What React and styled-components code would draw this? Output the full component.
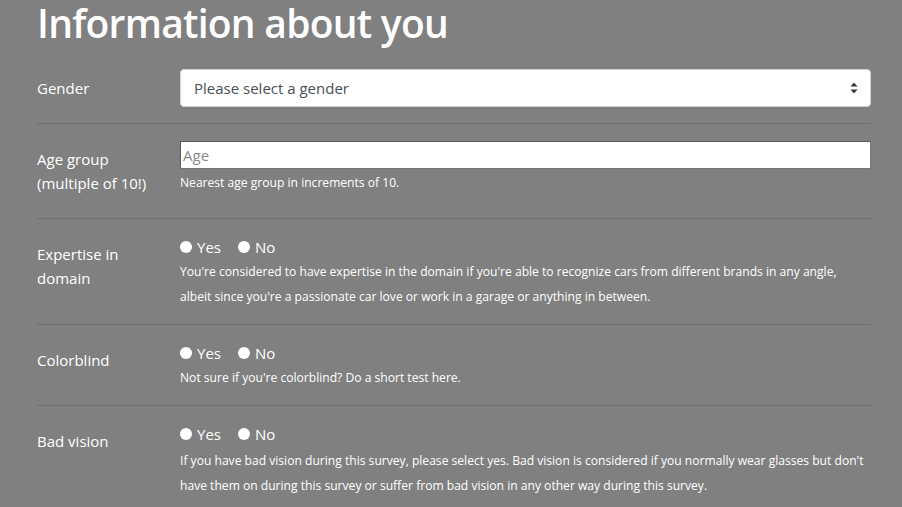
import React from "react";
import styled, { createGlobalStyle } from "styled-components";

const Global = createGlobalStyle`
  html, body { margin: 0; padding: 0; }
  body {
    background: #808080;
    color: #ffffff;
    font-family: "Open Sans", "Noto Sans", sans-serif;
    overflow: hidden;
  }
`;

const Page = styled.div`
  width: 834px;
  margin-left: 37px;
`;

const Title = styled.h1`
  margin: 0;
  font-size: 39px;
  font-weight: 600;
  line-height: 46px;
  height: 53px;
  letter-spacing: -0.75px;
`;

const Row = styled.div`
  display: grid;
  grid-template-columns: 143px 1fr;
  padding: 16px 0;
  border-bottom: ${(p) => (p.$last ? "none" : "1px solid #6e6e6e")};
`;

const Label = styled.div`
  font-size: 15px;
  line-height: 24px;
  padding: 7px 0;
`;

const Control = styled.div`
  display: flex;
  flex-direction: column;
`;

const SelectBox = styled.div`
  height: 38px;
  box-sizing: border-box;
  background: #fff;
  border: 1px solid #ced4da;
  border-radius: 4px;
  display: flex;
  align-items: center;
  justify-content: space-between;
  padding: 0 12px 0 13px;
  color: #495057;
  font-size: 15px;
`;

const TextInput = styled.input`
  height: 28px;
  box-sizing: border-box;
  margin: 1px 0 0;
  border: 1px solid #767676;
  border-top-color: #5a5a5a;
  border-left-color: #5a5a5a;
  background: #fff;
  font-family: inherit;
  font-size: 15px;
  padding: 0 2px;
  outline: none;
  &::placeholder { color: #8a8a8a; }
`;

const Help = styled.div`
  font-size: 12.1px;
  line-height: 25px;
  white-space: nowrap;
  margin-top: ${(p) => p.$mt || 0}px;
  margin-bottom: -1px;
`;

const Radios = styled.div`
  display: flex;
  gap: 17px;
  height: 24px;
  align-items: center;
  font-size: 15px;
`;

const RadioItem = styled.label`
  display: flex;
  align-items: center;
  gap: 5px;
`;

const Dot = styled.span`
  width: 12px;
  height: 12px;
  border-radius: 50%;
  background: #fff;
  display: inline-block;
`;

const Arrows = () => (
  <svg width="8" height="12" viewBox="0 0 8 12">
    <path d="M4 0.5 L7.5 4.5 H0.5 Z" fill="#343a40" />
    <path d="M4 11.5 L7.5 7.5 H0.5 Z" fill="#343a40" />
  </svg>
);

const YesNo = () => (
  <Radios>
    <RadioItem><Dot />Yes</RadioItem>
    <RadioItem><Dot />No</RadioItem>
  </Radios>
);

export default function App() {
  return (
    <Page>
      <Global />
      <Title>Information about you</Title>
      <Row>
        <Label>Gender</Label>
        <Control>
          <SelectBox>
            <span>Please select a gender</span>
            <Arrows />
          </SelectBox>
        </Control>
      </Row>
      <Row>
        <Label>Age group<br />(multiple of 10!)</Label>
        <Control>
          <TextInput placeholder="Age" />
          <Help $mt={1}>Nearest age group in increments of 10.</Help>
        </Control>
      </Row>
      <Row>
        <Label>Expertise in<br />domain</Label>
        <Control>
          <YesNo />
          <Help>
            You're considered to have expertise in the domain if you're able to recognize cars from different brands in any angle,<br />
            albeit since you're a passionate car love or work in a garage or anything in between.
          </Help>
        </Control>
      </Row>
      <Row>
        <Label>Colorblind</Label>
        <Control>
          <YesNo />
          <Help>Not sure if you're colorblind? Do a short test here.</Help>
        </Control>
      </Row>
      <Row $last>
        <Label>Bad vision</Label>
        <Control>
          <YesNo />
          <Help $mt={2}>
            If you have bad vision during this survey, please select yes. Bad vision is considered if you normally wear glasses but don't<br />
            have them on during this survey or suffer from bad vision in any other way during this survey.
          </Help>
        </Control>
      </Row>
    </Page>
  );
}
